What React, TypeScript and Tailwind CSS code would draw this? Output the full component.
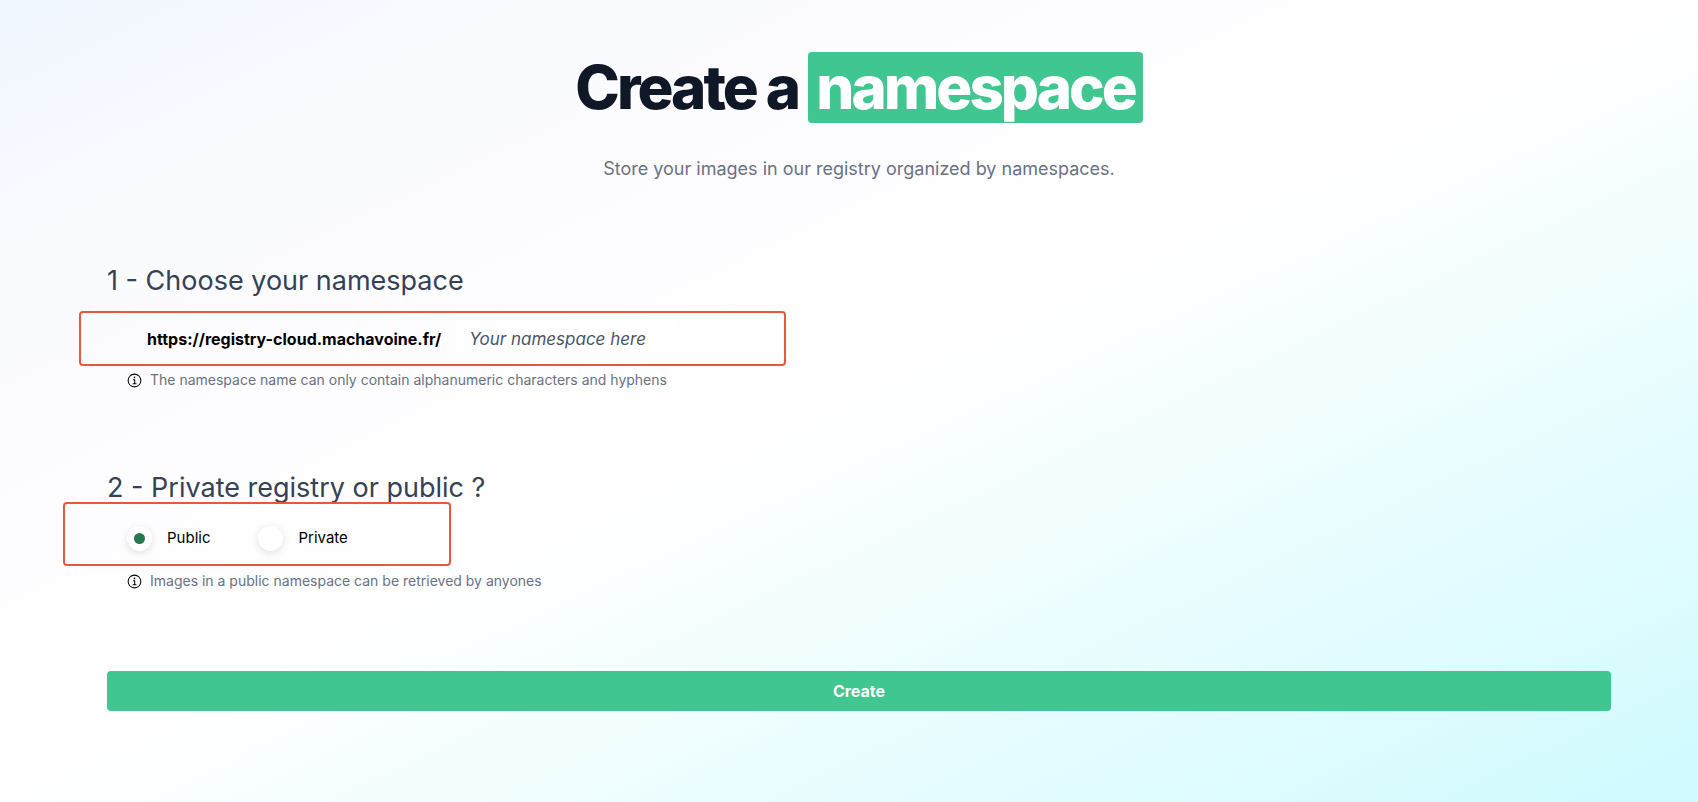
import type { ReactNode } from "react";

function Hint({ children }: { children: ReactNode }) {
  return (
    <p className="flex items-center gap-2 pl-5 text-sm text-gray-500">
      <svg viewBox="0 0 16 16" className="size-[15px] shrink-0" fill="none" stroke="#000" aria-hidden="true">
        <circle cx="8" cy="8" r="6.8" strokeWidth="1.1" />
        <path d="M6.4 7.1H8.2V11.4M6.1 11.4H10.1" strokeWidth="1.1" />
        <circle cx="8" cy="4.7" r="0.9" fill="#000" stroke="none" />
      </svg>
      <span>{children}</span>
    </p>
  );
}

function Choice({ label, checked }: { label: string; checked?: boolean }) {
  return (
    <label className="flex items-center gap-[15px] text-[15px] text-black">
      <input
        type="radio"
        name="visibility"
        defaultChecked={checked}
        className="grid size-[25px] appearance-none place-items-center rounded-full bg-white shadow-[0_2px_8px_rgba(0,0,0,0.12)] before:size-[11px] before:rounded-full checked:before:bg-[#26794d]"
      />
      {label}
    </label>
  );
}

export default function App() {
  return (
    <main className="min-h-screen bg-[linear-gradient(to_bottom_right,#f1f7ff_0%,#fcfcff_25%,#ffffff_50%,#cffafe_100%)] pt-[52px] pr-[87px] pb-8 pl-[107px] font-['Inter',sans-serif]">
      <header className="text-center">
        <h1 className="text-[60px] leading-[71px] font-extrabold tracking-tighter text-gray-900">
          Create a{" "}
          <span className="inline-block rounded bg-[#40c690] px-2 text-white">namespace</span>
        </h1>
        <p className="mt-8 text-lg leading-7 text-gray-500">
          Store your images in our registry organized by namespaces.
        </p>
      </header>

      <form onSubmit={(e) => e.preventDefault()}>
        <section className="mt-20">
          <h2 className="text-[27px] leading-9 text-gray-700">
            <label htmlFor="namespace">1 - Choose your namespace</label>
          </h2>
          <div className="relative mt-3 flex h-[55px] items-center pl-10">
            <span className="text-base font-bold text-black">https://registry-cloud.machavoine.fr/</span>
            <input
              id="namespace"
              type="text"
              placeholder="Your namespace here"
              className="ml-4 h-10 w-[220px] rounded bg-white/60 px-3 text-[17px] italic outline-none placeholder:text-gray-600"
            />
            <div className="pointer-events-none absolute inset-y-0 -left-7 w-[707px] rounded border-2 border-[#e8583c]" />
          </div>
          <div className="mt-1">
            <Hint>The namespace name can only contain alphanumeric characters and hyphens</Hint>
          </div>
        </section>

        <section className="mt-20">
          <h2 className="text-[27px] leading-9 text-gray-700">2 - Private registry or public ?</h2>
          <div className="relative flex h-[65px] items-center gap-12 pl-5">
            <Choice label="Public" checked />
            <Choice label="Private" />
            <div className="pointer-events-none absolute -top-1 -left-11 h-16 w-[388px] rounded border-2 border-[#e8583c]" />
          </div>
          <Hint>Images in a public namespace can be retrieved by anyones</Hint>
        </section>

        <button type="submit" className="mt-20 h-10 w-full rounded bg-[#40c690] text-base font-bold text-white">
          Create
        </button>
      </form>
    </main>
  );
}
